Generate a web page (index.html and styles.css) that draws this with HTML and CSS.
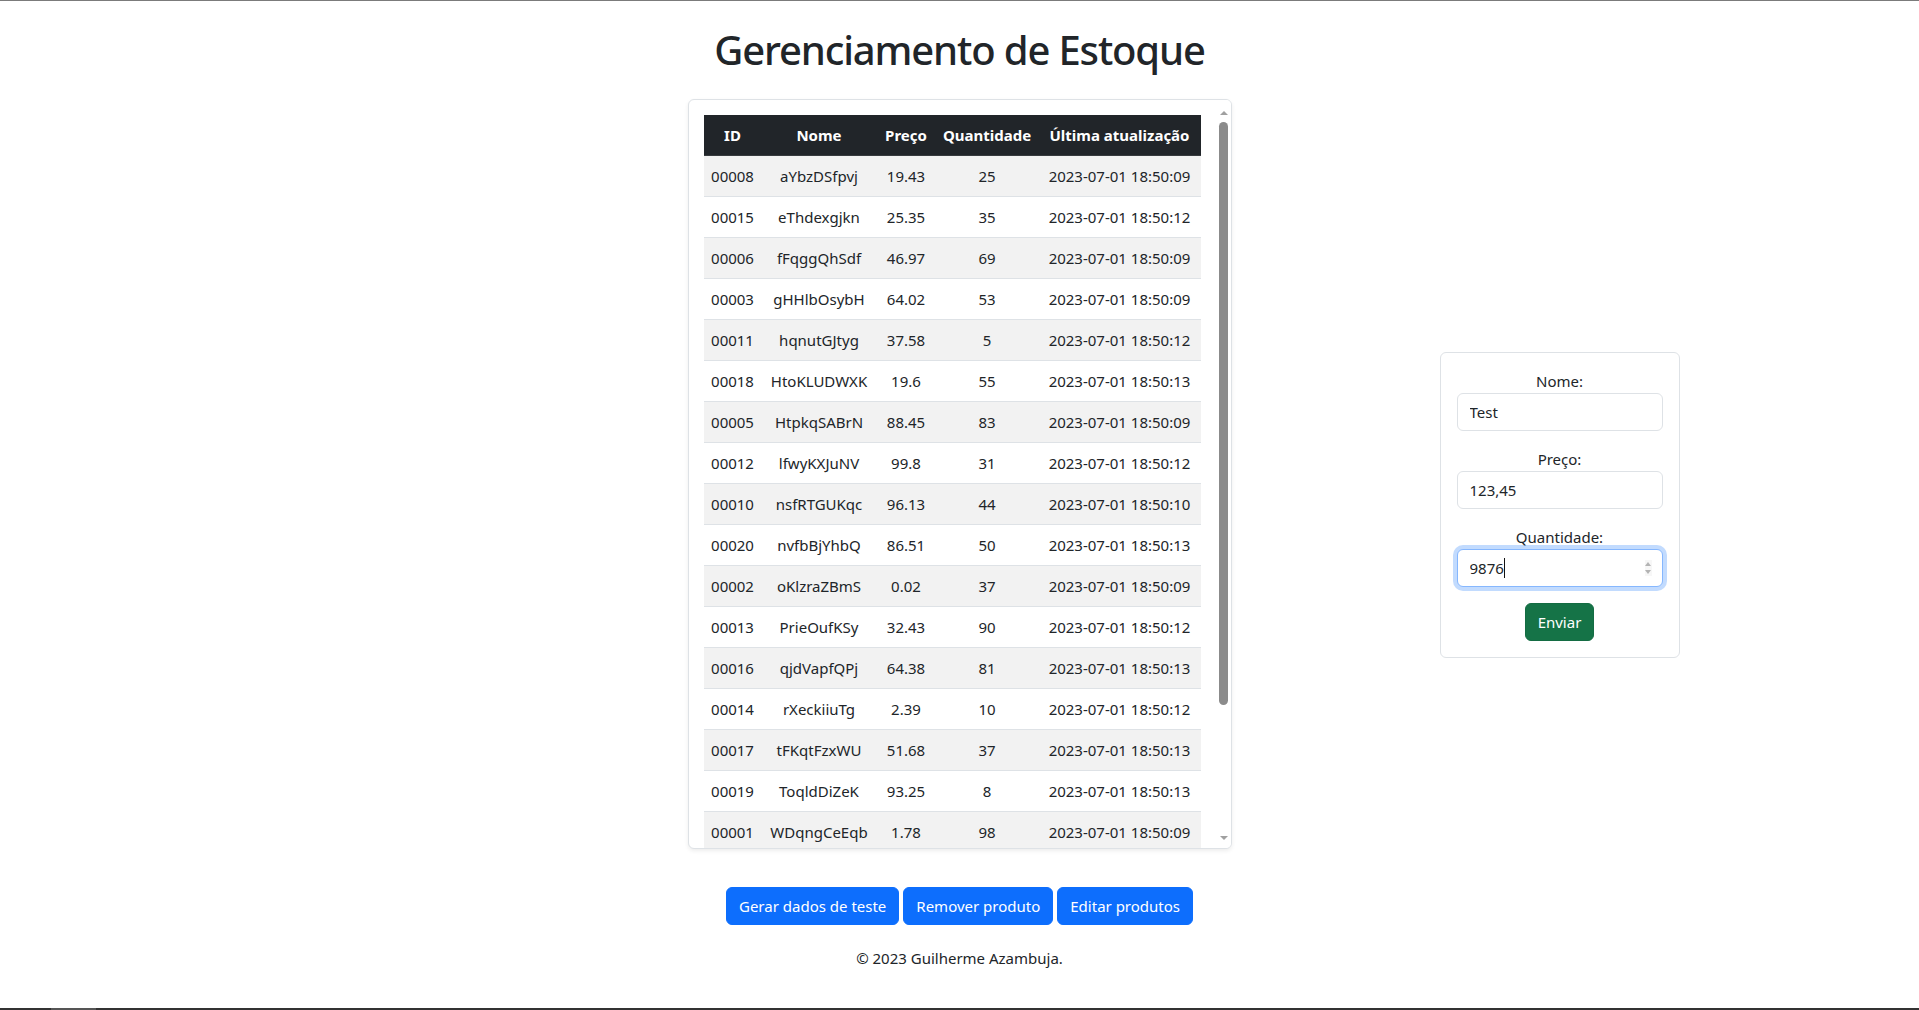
FILE: index.html
```html
<!DOCTYPE html>
<html lang="pt-BR">
<head>
<meta charset="utf-8">
<title>Gerenciamento de Estoque</title>
<link rel="stylesheet" href="styles.css">
</head>
<body>
<div class="topline"></div>
<main class="page">
  <h1 class="title">Gerenciamento de Estoque</h1>
  <div class="layout">
    <div class="spacer"></div>
    <div class="table-shell">
      <section class="table-card">
        <table class="stock">
          <colgroup>
            <col class="c-id"><col class="c-nome"><col class="c-preco"><col class="c-qtd"><col class="c-data">
          </colgroup>
          <thead>
            <tr><th>ID</th><th>Nome</th><th>Preço</th><th>Quantidade</th><th>Última atualização</th></tr>
          </thead>
          <tbody>
            <tr><td>00008</td><td>aYbzDSfpvj</td><td>19.43</td><td>25</td><td>2023-07-01 18:50:09</td></tr>
            <tr><td>00015</td><td>eThdexgjkn</td><td>25.35</td><td>35</td><td>2023-07-01 18:50:12</td></tr>
            <tr><td>00006</td><td>fFqggQhSdf</td><td>46.97</td><td>69</td><td>2023-07-01 18:50:09</td></tr>
            <tr><td>00003</td><td>gHHlbOsybH</td><td>64.02</td><td>53</td><td>2023-07-01 18:50:09</td></tr>
            <tr><td>00011</td><td>hqnutGJtyg</td><td>37.58</td><td>5</td><td>2023-07-01 18:50:12</td></tr>
            <tr><td>00018</td><td>HtoKLUDWXK</td><td>19.6</td><td>55</td><td>2023-07-01 18:50:13</td></tr>
            <tr><td>00005</td><td>HtpkqSABrN</td><td>88.45</td><td>83</td><td>2023-07-01 18:50:09</td></tr>
            <tr><td>00012</td><td>lfwyKXJuNV</td><td>99.8</td><td>31</td><td>2023-07-01 18:50:12</td></tr>
            <tr><td>00010</td><td>nsfRTGUKqc</td><td>96.13</td><td>44</td><td>2023-07-01 18:50:10</td></tr>
            <tr><td>00020</td><td>nvfbBjYhbQ</td><td>86.51</td><td>50</td><td>2023-07-01 18:50:13</td></tr>
            <tr><td>00002</td><td>oKlzraZBmS</td><td>0.02</td><td>37</td><td>2023-07-01 18:50:09</td></tr>
            <tr><td>00013</td><td>PrieOufKSy</td><td>32.43</td><td>90</td><td>2023-07-01 18:50:12</td></tr>
            <tr><td>00016</td><td>qjdVapfQPj</td><td>64.38</td><td>81</td><td>2023-07-01 18:50:13</td></tr>
            <tr><td>00014</td><td>rXeckiiuTg</td><td>2.39</td><td>10</td><td>2023-07-01 18:50:12</td></tr>
            <tr><td>00017</td><td>tFKqtFzxWU</td><td>51.68</td><td>37</td><td>2023-07-01 18:50:13</td></tr>
            <tr><td>00019</td><td>ToqldDiZeK</td><td>93.25</td><td>8</td><td>2023-07-01 18:50:13</td></tr>
            <tr><td>00001</td><td>WDqngCeEqb</td><td>1.78</td><td>98</td><td>2023-07-01 18:50:09</td></tr>
          </tbody>
        </table>
      </section>
      <div class="fake-scroll" aria-hidden="true">
        <span class="arrow-up"></span>
        <span class="thumb"></span>
        <span class="arrow-down"></span>
      </div>
    </div>
    <aside class="side">
      <form class="form-card">
        <div class="field">
          <label class="label" for="nome">Nome:</label>
          <input class="input" id="nome" type="text" value="Test">
        </div>
        <div class="field">
          <label class="label" for="preco">Preço:</label>
          <input class="input" id="preco" type="text" value="123,45">
        </div>
        <div class="field">
          <label class="label" for="qtd">Quantidade:</label>
          <div class="input-wrap">
            <input class="input input-focus" id="qtd" type="number" value="9876">
            <span class="caret"></span>
            <span class="spinner"><span class="spin-up"></span><span class="spin-down"></span></span>
          </div>
        </div>
        <div class="submit-row">
          <button class="btn btn-success" type="button">Enviar</button>
        </div>
      </form>
    </aside>
  </div>
  <div class="btn-row">
    <button class="btn btn-primary" type="button">Gerar dados de teste</button>
    <button class="btn btn-primary" type="button">Remover produto</button>
    <button class="btn btn-primary" type="button">Editar produtos</button>
  </div>
  <footer class="footer">© 2023 Guilherme Azambuja.</footer>
</main>
<div class="taskbar"><span class="taskbar-seg"></span></div>
</body>
</html>
```

FILE: styles.css
```css
* { box-sizing: border-box; }

html, body {
  margin: 0;
  padding: 0;
}

body {
  min-height: 100vh;
  display: flex;
  flex-direction: column;
  background: #fff;
  color: #212529;
  font-family: "Noto Sans", "Open Sans", sans-serif;
  font-size: 15px;
  line-height: 24px;
}

.topline {
  height: 1px;
  background: #7b7b7b;
  flex: none;
}

.page {
  flex: 1;
}

.title {
  margin: 25px 0 25px;
  text-align: center;
  font-size: 40px;
  line-height: 48px;
  font-weight: 500;
  letter-spacing: -1.15px;
  color: #212529;
}

.layout {
  display: grid;
  grid-template-columns: 1fr 544px 1fr;
  align-items: start;
}

.table-shell {
  position: relative;
}

.table-card {
  height: 750px;
  overflow: hidden;
  border: 1px solid #dee2e6;
  border-radius: 6px;
  box-shadow: 0 2px 4px rgba(0, 0, 0, 0.075);
  padding: 15px;
  background: #fff;
}

.fake-scroll {
  position: absolute;
  top: 1px;
  right: 1px;
  width: 15px;
  height: 748px;
  background: #fff;
  border-radius: 0 5px 5px 0;
}

.arrow-up {
  position: absolute;
  left: 4px;
  top: 11px;
  width: 0;
  height: 0;
  border-left: 4px solid transparent;
  border-right: 4px solid transparent;
  border-bottom: 4px solid #a0a0a0;
}

.arrow-down {
  position: absolute;
  left: 4px;
  bottom: 8px;
  width: 0;
  height: 0;
  border-left: 4px solid transparent;
  border-right: 4px solid transparent;
  border-top: 4px solid #a0a0a0;
}

.thumb {
  position: absolute;
  left: 3px;
  top: 22px;
  width: 9px;
  height: 583px;
  border-radius: 5px;
  background: #8b8b8b;
}

.stock {
  width: 497px;
  table-layout: fixed;
  border-collapse: collapse;
}
.c-id { width: 58px; }
.c-nome { width: 115px; }
.c-preco { width: 59px; }
.c-qtd { width: 103px; }
.c-data { width: 162px; }

.stock th,
.stock td {
  padding: 8px 0;
  text-align: center;
  white-space: nowrap;
  border-bottom: 1px solid #dee2e6;
  font-size: 15px;
  line-height: 24px;
}

.stock th {
  background: #212529;
  color: #fff;
  font-weight: 700;
  border-bottom-color: #373b3e;
}

.stock tbody tr:nth-child(odd) td {
  background: #f2f2f2;
}

.side {
  padding: 253px 0 0 208px;
}

.form-card {
  width: 240px;
  border: 1px solid #dee2e6;
  border-radius: 6px;
  padding: 16px;
  margin: 0;
}

.field {
  margin-bottom: 16px;
}

.label {
  display: block;
  text-align: center;
  line-height: 24px;
}

.input {
  display: block;
  width: 100%;
  height: 38px;
  padding: 6px 12px;
  font-family: inherit;
  font-size: 15px;
  line-height: 24px;
  color: #212529;
  background: #fff;
  border: 1px solid #dee2e6;
  border-radius: 6px;
  outline: none;
  -moz-appearance: textfield;
}
.input::-webkit-inner-spin-button,
.input::-webkit-outer-spin-button {
  -webkit-appearance: none;
  margin: 0;
}

.input-focus {
  border-color: #86b7fe;
  box-shadow: 0 0 0 4px rgba(13, 110, 253, 0.25);
}

.input-wrap {
  position: relative;
}

.caret {
  position: absolute;
  left: 47px;
  top: 9px;
  width: 1px;
  height: 20px;
  background: #111;
}

.spinner {
  position: absolute;
  right: 11px;
  top: 11px;
  width: 7px;
  height: 16px;
  display: flex;
  flex-direction: column;
  justify-content: space-between;
  align-items: center;
  background: #f7f7f7;
  padding: 2px 0;
}
.spin-up {
  width: 0;
  height: 0;
  border-left: 3px solid transparent;
  border-right: 3px solid transparent;
  border-bottom: 4px solid #b3b3b3;
}
.spin-down {
  width: 0;
  height: 0;
  border-left: 3px solid transparent;
  border-right: 3px solid transparent;
  border-top: 4px solid #b3b3b3;
}

.submit-row {
  display: flex;
  justify-content: center;
}

.btn {
  display: inline-block;
  height: 38px;
  padding: 6px 12px;
  font-family: inherit;
  font-size: 15px;
  line-height: 24px;
  color: #fff;
  border: 1px solid transparent;
  border-radius: 6px;
  cursor: pointer;
}

.btn-success {
  background: #157347;
  border-color: #146c43;
}

.btn-primary {
  background: #0d6efd;
  border-color: #0d6efd;
}

.btn-row {
  display: flex;
  justify-content: center;
  gap: 4px;
  margin-top: 38px;
}

.footer {
  margin-top: 21px;
  text-align: center;
  line-height: 24px;
}

.taskbar {
  flex: none;
  height: 2px;
  background: #333;
  display: flex;
}
.taskbar-seg {
  margin-left: 51px;
  width: 45px;
  background: #555;
}
```
